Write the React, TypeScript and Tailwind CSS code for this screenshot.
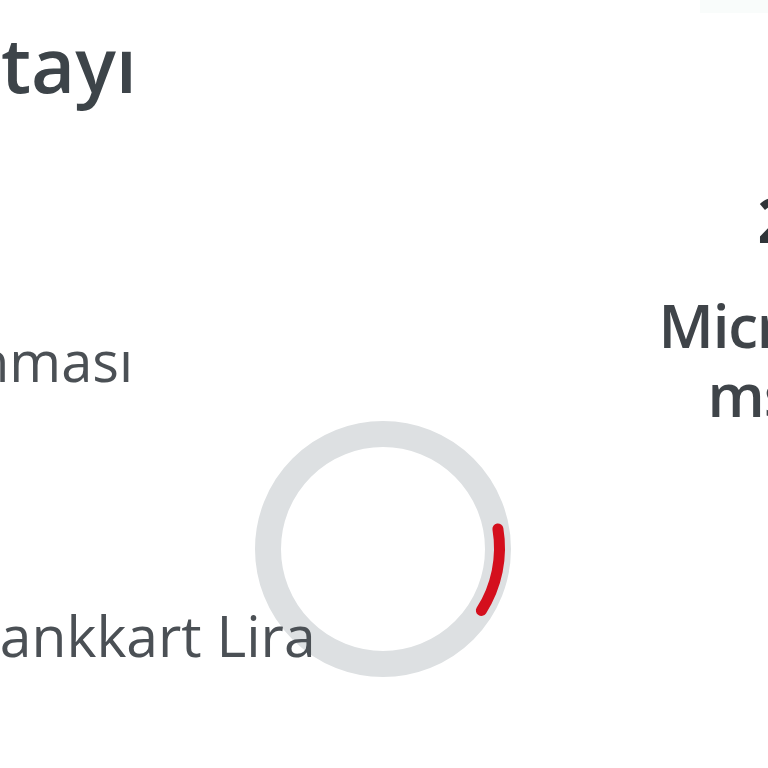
import React from 'react';

const font = { fontFamily: '"Open Sans", "Noto Sans", sans-serif' };

// Loading spinner drawn behind the text
function Spinner() {
    return (
        <svg width="260" height="260" viewBox="0 0 260 260" className="absolute left-[253px] top-[419px]">
            <circle cx="130" cy="130" r="115" fill="none" stroke="#dde0e2" strokeWidth="26" />
            <path
                d="M 244.9 109.9 A 116 116 0 0 1 228.37 191.47"
                fill="none"
                stroke="#d40f1d"
                strokeWidth="11"
                strokeLinecap="round"
            />
        </svg>
    );
}

export default function App() {
    return (
        <div className="relative w-[768px] h-[768px] overflow-hidden bg-white" style={font}>
            <Spinner />
            <div className="relative flex w-full">
                {/* left column: labels */}
                <div className="flex flex-col pt-[26px] whitespace-nowrap">
                    <h1 className="text-[76px] leading-none font-semibold text-[#3d4449] ml-[1px]">tayı</h1>
                    <div className="mt-[230px] text-[56px] leading-none text-[#4b5055] -ml-[25px]">nması</div>
                    <div className="mt-[219px] text-[57px] leading-none text-[#4b5055] -ml-[37px]">Bankkart Lira</div>
                </div>

                {/* right column: amount + merchant */}
                <div className="ml-auto -mr-[240px] w-[420px] shrink-0 flex flex-col items-center whitespace-nowrap">
                    <div className="self-start ml-[112px] h-[13px] w-[136px] bg-[#f9fcfb]" />
                    <div className="mt-[175px] pr-[10px] text-[62px] leading-none font-bold text-[#2f3438]">29</div>
                    <div className="mt-[41px] pr-[14px] text-[60px] leading-[69px] tracking-[-0.02em] font-semibold text-[#3f4449] text-center">
                        <p>Microsoft</p>
                        <p>msbill</p>
                    </div>
                </div>
            </div>
        </div>
    );
}
